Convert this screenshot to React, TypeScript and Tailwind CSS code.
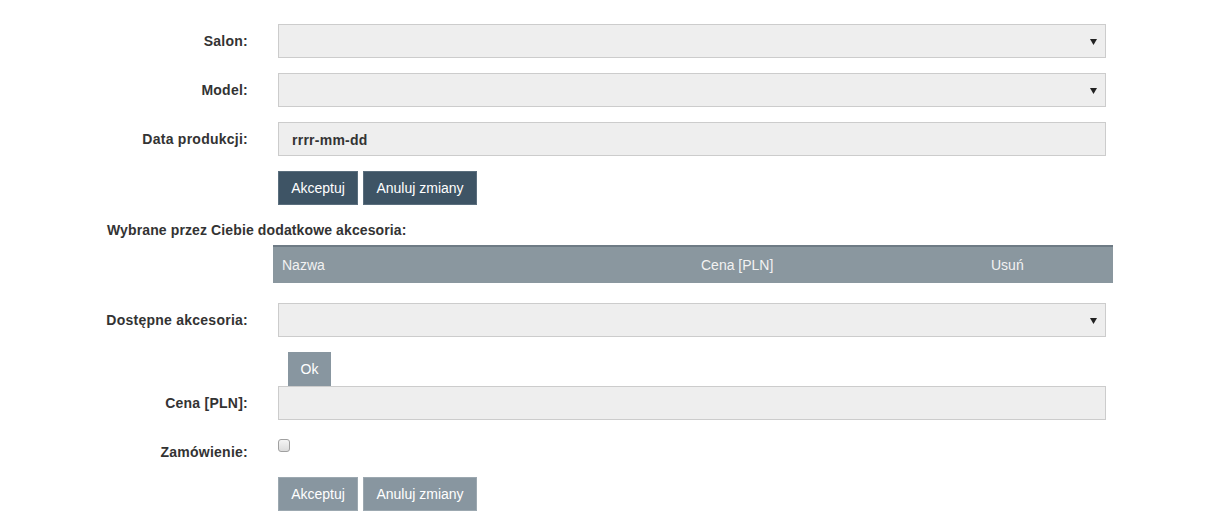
import React from 'react';

const font = { fontFamily: '"Liberation Sans", Arial, sans-serif' };

function Caret() {
  return (
    <svg width="7" height="6" viewBox="0 0 7 6" className="absolute right-[8px] top-[14px]">
      <path d="M0 0 H7 L3.5 6 Z" fill="#222" />
    </svg>
  );
}

function Field({ label, select, value }: { label: string; select?: boolean; value?: string }) {
  return (
    <div className="flex items-center h-[34px]">
      <label className="w-[248px] shrink-0 text-right text-[14px] font-bold text-[#333] tracking-[0.25px]">{label}</label>
      <div className="relative ml-[30px] w-[828px] h-[34px] bg-[#eeeeee] border border-[#cccccc]">
        {value && (
          <span className="absolute left-[13px] top-[7px] text-[14px] font-bold text-[#333] tracking-[0.25px]">{value}</span>
        )}
        {select && <Caret />}
      </div>
    </div>
  );
}

function Buttons({ dark }: { dark?: boolean }) {
  const cls = dark ? 'bg-[#3e5465] border-[#5a6e7d]' : 'bg-[#8896a0] border-[#9ca8b0]';
  return (
    <div className="flex ml-[278px] gap-[5px]">
      <button className={`h-[34px] w-[80px] border text-[14px] text-white ${cls}`}>Akceptuj</button>
      <button className={`h-[34px] w-[114px] border text-[14px] text-white ${cls}`}>Anuluj zmiany</button>
    </div>
  );
}

export default function App() {
  return (
    <div className="w-[1219px] h-[527px] bg-white pt-[24px]" style={font}>
      <div className="flex flex-col gap-[15px]">
        <Field label="Salon:" select />
        <Field label="Model:" select />
        <Field label="Data produkcji:" value="rrrr-mm-dd" />
        <Buttons dark />
      </div>

      <h4 className="mt-[15px] pl-[107px] text-[14px] leading-[20px] font-bold text-[#333] tracking-[0.12px]">
        Wybrane przez Ciebie dodatkowe akcesoria:
      </h4>

      <div className="mt-[5px] ml-[273px] w-[840px] h-[38px] flex items-center bg-[#8a979f] border-t-2 border-[#6e7b85] text-[14px] text-[#f2f2f2]">
        <div className="w-[419px] pl-[9px]">Nazwa</div>
        <div className="w-[290px] pl-[9px]">Cena [PLN]</div>
        <div className="pl-[9px]">Usuń</div>
      </div>

      <div className="mt-[20px]">
        <Field label="Dostępne akcesoria:" select />
      </div>

      <div className="mt-[15px] ml-[288px] w-[43px] h-[34px] flex items-center justify-center bg-[#8896a0] text-white text-[14px]">
        Ok
      </div>

      <Field label="Cena [PLN]:" />

      <div className="mt-[15px] flex h-[34px]">
        <label className="w-[248px] shrink-0 text-right text-[14px] font-bold text-[#333] tracking-[0.25px] self-center">
          Zamówienie:
        </label>
        <input
          type="checkbox"
          className="appearance-none ml-[30px] mt-[4px] w-[12px] h-[13px] self-start rounded-[3px] border border-[#a0a0a0] bg-gradient-to-b from-[#f4f4f4] to-[#dcdcdc]"
        />
      </div>

      <div className="mt-[8px]">
        <Buttons />
      </div>
    </div>
  );
}
